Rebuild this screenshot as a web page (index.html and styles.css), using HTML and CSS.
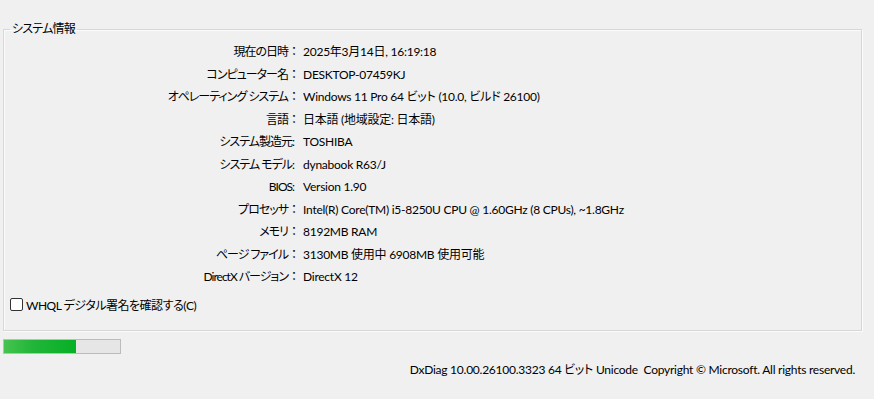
FILE: index.html
```html
<!DOCTYPE html>
<html lang="ja">
<head>
<meta charset="utf-8">
<title>DxDiag</title>
<link rel="stylesheet" href="styles.css">
</head>
<body>
<div class="page">
  <fieldset class="group">
    <legend class="group-title">システム情報</legend>
    <div class="info">
      <div class="label">現在の日時<span class="fw">：</span></div><div class="value">2025年3月14日, 16:19:18</div>
      <div class="label">コンピューター名<span class="fw">：</span></div><div class="value">DESKTOP-07459KJ</div>
      <div class="label">オペレーティング システム<span class="fw">：</span></div><div class="value">Windows 11 Pro 64 ビット (10.0, ビルド 26100)</div>
      <div class="label">言語<span class="fw">：</span></div><div class="value">日本語 (地域設定: 日本語)</div>
      <div class="label ascii">システム製造元:</div><div class="value">TOSHIBA</div>
      <div class="label ascii">システム モデル:</div><div class="value">dynabook R63/J</div>
      <div class="label ascii">BIOS:</div><div class="value">Version 1.90</div>
      <div class="label">プロセッサ<span class="fw">：</span></div><div class="value">Intel(R) Core(TM) i5-8250U CPU @ 1.60GHz (8 CPUs), ~1.8GHz</div>
      <div class="label">メモリ<span class="fw">：</span></div><div class="value">8192MB RAM</div>
      <div class="label">ページ ファイル<span class="fw">：</span></div><div class="value">3130MB 使用中 6908MB 使用可能</div>
      <div class="label">DirectX バージョン<span class="fw">：</span></div><div class="value">DirectX 12</div>
    </div>
    <label class="check">
      <span class="box"></span>
      <span class="check-text">WHQL デジタル署名を確認する(C)</span>
    </label>
  </fieldset>
  <div class="progress"><div class="progress-fill" style="width: 62%"></div></div>
  <div class="footer">DxDiag 10.00.26100.3323 64 ビット Unicode&nbsp;&nbsp;Copyright © Microsoft. All rights reserved.</div>
</div>
</body>
</html>
```

FILE: styles.css
```css
html, body {
  margin: 0;
  padding: 0;
  background: #f0f0f0;
}

body {
  font-family: Lato, "Noto Sans CJK JP", sans-serif;
  font-feature-settings: "palt";
  font-size: 12px;
  letter-spacing: -0.25px;
  color: #000;
  width: 874px;
  height: 399px;
  overflow: hidden;
}

.page {
  padding: 21px 12px 0 3px;
}

.group {
  margin: 0;
  padding: 4px 0 14px 6px;
  border: 1px solid #d7d7d7;
  box-shadow: inset 1px 1px 0 #fbfbfb, 1px 1px 0 #fbfbfb;
  min-width: 0;
}

.group-title {
  margin-left: 0;
  padding: 0 2px;
  line-height: 16px;
  font-size: 12px;
  letter-spacing: -0.8px;
  color: #000;
}

.info {
  display: grid;
  grid-template-columns: 290px 1fr;
  grid-auto-rows: 22.5px;
  column-gap: 3px;
  line-height: 22.5px;
  white-space: nowrap;
}

.label {
  text-align: right;
  letter-spacing: -1px;
}

.label.ascii {
  padding-right: 6px;
}

.fw {
  font-feature-settings: normal;
  font-family: "Noto Sans CJK JP", sans-serif;
  line-height: 1;
  letter-spacing: 0;
}

.check {
  display: flex;
  align-items: center;
  gap: 3px;
  margin-top: 5px;
  height: 22px;
  padding-left: 0;
}

.check-text {
  letter-spacing: -0.5px;
}

.box {
  width: 11px;
  height: 11px;
  border: 1px solid #333;
  border-radius: 2px;
  background: #fff;
  box-sizing: content-box;
}

.progress {
  margin-top: 8px;
  width: 116px;
  height: 13px;
  border: 1px solid #bcbcbc;
  background: #e6e6e6;
}

.progress-fill {
  height: 100%;
  background: linear-gradient(90deg, #45c44f 0%, #22b53a 40%, #06b025 100%);
}

.footer {
  margin-top: 8px;
  line-height: 16px;
  text-align: right;
  padding-right: 7px;
  white-space: nowrap;
}
```
